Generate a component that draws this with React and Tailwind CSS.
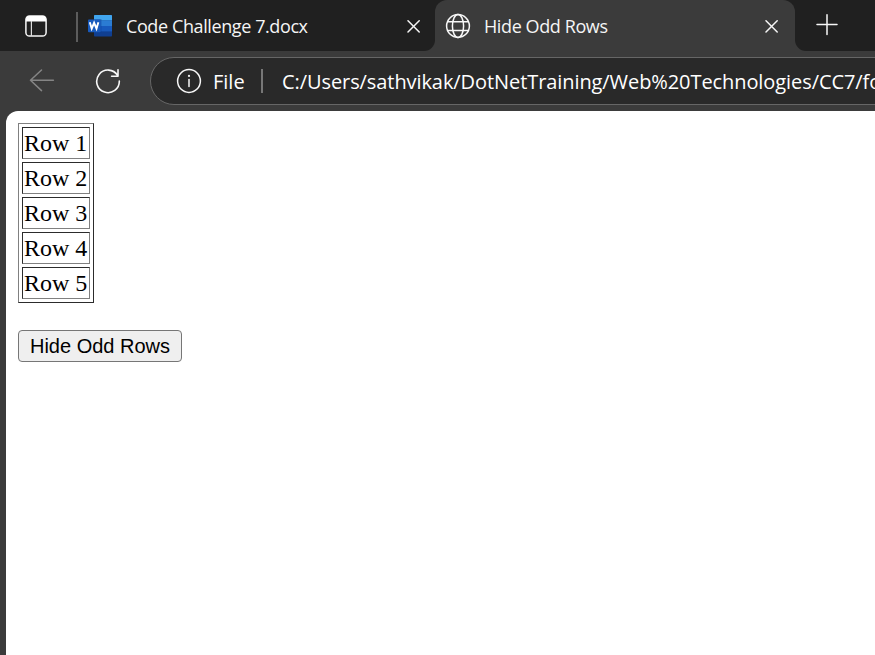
const rows = ["Row 1", "Row 2", "Row 3", "Row 4", "Row 5"];

function CloseIcon() {
  return (
    <svg width="14" height="14" viewBox="0 0 14 14" fill="none" stroke="#f5f5f5" strokeWidth="1.5" strokeLinecap="round">
      <path d="M1 0.8 12.2 12M12.2 0.8 1 12" />
    </svg>
  );
}

function WordIcon() {
  return (
    <svg width="25" height="22" viewBox="0 0 25 22">
      <rect x="6" y="0" width="18" height="21.6" rx="0.8" fill="#103f91" />
      <path d="M6 0.8Q6 0 6.8 0H23.2Q24 0 24 0.8V5.6H6Z" fill="#41a5ee" />
      <path d="M6 5.6H24V11H6Z" fill="#2b7cd3" />
      <path d="M6 11H24V16.4H6Z" fill="#185abd" />
      <rect x="6" y="4" width="7.5" height="14" fill="#103f91" opacity="0.4" />
      <rect x="0" y="4.6" width="12.6" height="12.6" rx="0.9" fill="#185abd" />
      <path d="M1.8 7.3 3.7 13.6 6.1 7.8 8.5 13.6 10.4 7.3" fill="none" stroke="#fff" strokeWidth="1.9" />
    </svg>
  );
}

function TabBar() {
  return (
    <div className="flex h-[51px] bg-[#202020] text-[18px] leading-6 text-[#f5f5f5]">
      <div className="w-[435px] shrink-0 bg-[#3b3b3b]">
        <div className="flex h-full items-center rounded-br-[11px] bg-[#202020] pl-[25px]">
          <svg width="22" height="22" viewBox="0 0 22 22" className="mt-px shrink-0">
            <rect x="0.9" y="0.9" width="20.2" height="20.2" rx="3.6" fill="none" stroke="#f7f7f7" strokeWidth="1.5" />
            <path d="M1 6.5V4.2Q1 1 4.2 1H17.8Q21 1 21 4.2V6.5Z" fill="#fff" />
            <path d="M6.4 6V21" stroke="#ddd" strokeWidth="1.2" />
          </svg>
          <div className="ml-[29px] mt-[2px] h-[30px] w-[2px] shrink-0 bg-[#5c5c5c]" />
          <div className="ml-[10px] mt-[1px] shrink-0"><WordIcon /></div>
          <span className="ml-[13px] w-[281px] shrink-0 whitespace-nowrap tracking-[-0.4px]">Code Challenge 7.docx</span>
          <div className="mt-[2px]"><CloseIcon /></div>
        </div>
      </div>
      <div className="flex w-[360px] shrink-0 items-center rounded-t-[12px] bg-[#3b3b3b] pl-[10px]">
        <svg width="26" height="26" viewBox="0 0 26 26" fill="none" stroke="#f7f7f7" strokeWidth="1.5" className="shrink-0">
          <circle cx="13" cy="13" r="11.4" />
          <ellipse cx="13" cy="13" rx="5.6" ry="11.4" />
          <path d="M2.6 8.7H23.4M2.6 17.5H23.4" />
        </svg>
        <span className="ml-[13px] w-[281px] shrink-0 whitespace-nowrap tracking-[-0.4px]">Hide Odd Rows</span>
        <div className="mt-[2px]"><CloseIcon /></div>
      </div>
      <div className="flex-1 bg-[#3b3b3b]">
        <div className="h-full rounded-bl-[11px] bg-[#202020] pl-[21px] pt-[14px]">
          <svg width="22" height="22" viewBox="0 0 22 22" stroke="#f7f7f7" strokeWidth="1.5" strokeLinecap="round">
            <path d="M11 0.8V20.4M1 10.6H21" />
          </svg>
        </div>
      </div>
    </div>
  );
}

function Toolbar() {
  return (
    <div className="flex h-[60px] items-center overflow-hidden bg-[#3b3b3b] pl-[29px]">
      <svg width="26" height="24" viewBox="0 0 26 24" fill="none" stroke="#858585" strokeWidth="1.5" strokeLinecap="round" strokeLinejoin="round" className="shrink-0">
        <path d="M24.4 11.3H1.5M12.5 1 1.5 11.3 12.5 21.6" />
      </svg>
      <svg width="26" height="26" viewBox="0 0 26 26" fill="none" stroke="#f7f7f7" strokeWidth="1.6" strokeLinecap="round" strokeLinejoin="round" className="ml-[40px] shrink-0">
        <path d="M23 1.8V8.2H16.6M22.6 7.4A11.3 11.3 0 1 0 24.3 13" />
      </svg>
      <div className="ml-[29px] flex h-[48px] w-[900px] shrink-0 items-center rounded-full border-[1.5px] border-[#666] bg-[#292929] pl-[25px] text-[20px] leading-7 text-white">
        <svg width="26" height="26" viewBox="0 0 26 26" fill="none" stroke="#f7f7f7" strokeWidth="1.5" className="shrink-0">
          <circle cx="13" cy="13" r="11.4" />
          <path d="M13 11.4V18.6" strokeLinecap="round" />
          <circle cx="13" cy="7.9" r="1.1" fill="#f7f7f7" stroke="none" />
        </svg>
        <span className="ml-[11px] mt-[2px] w-[48px] shrink-0 whitespace-nowrap">File</span>
        <div className="h-[24px] w-[2px] shrink-0 bg-[#777]" />
        <span className="ml-[19px] mt-[2px] whitespace-nowrap tracking-[-0.08px]">C:/Users/sathvikak/DotNetTraining/Web%20Technologies/CC7/for</span>
      </div>
    </div>
  );
}

export default function App() {
  return (
    <div className="h-[655px] w-[875px] overflow-hidden bg-[#3b3b3b] font-['Open_Sans','Noto_Sans',sans-serif]">
      <TabBar />
      <Toolbar />
      <main className="ml-[6px] h-[544px] rounded-tl-[12px] bg-white pl-[12px] pt-[12px] text-black">
        <div className="flex w-[76px] flex-col gap-[3px] border border-b-[#2c2c2c] border-l-[#808080] border-r-[#2c2c2c] border-t-[#808080] p-[3px] font-['Liberation_Serif',serif] text-[24px] leading-[26px]">
          {rows.map((row) => (
            <div key={row} className="h-[32px] whitespace-nowrap border border-b-[#808080] border-l-[#2c2c2c] border-r-[#808080] border-t-[#2c2c2c] px-[1px] py-[2px]">
              {row}
            </div>
          ))}
        </div>
        <button className="mt-[27px] flex h-[32px] w-[164px] items-center justify-center whitespace-nowrap rounded-[4px] border border-[#767676] bg-[#efefef] font-['Liberation_Sans',sans-serif] text-[20px] leading-6">
          Hide Odd Rows
        </button>
      </main>
    </div>
  );
}
